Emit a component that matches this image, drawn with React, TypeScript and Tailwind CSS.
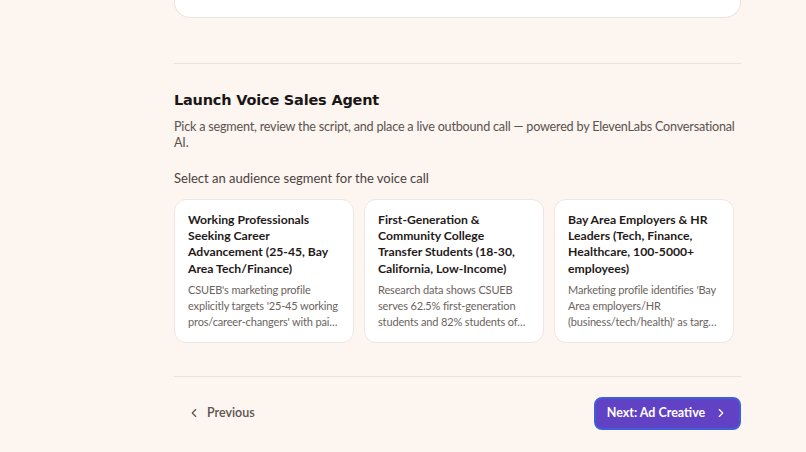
import { ChevronLeft, ChevronRight } from "lucide-react";

const segments = [
    {
        title: "Working Professionals Seeking Career Advancement (25-45, Bay Area Tech/Finance)",
        desc: "CSUEB's marketing profile explicitly targets '25-45 working pros/career-changers' with pain points around time, cost and flexibility in their next step.",
    },
    {
        title: "First-Generation & Community College Transfer Students (18-30, California, Low-Income)",
        desc: "Research data shows CSUEB serves 62.5% first-generation students and 82% students of color across the East Bay region.",
    },
    {
        title: "Bay Area Employers & HR Leaders (Tech, Finance, Healthcare, 100-5000+ employees)",
        desc: "Marketing profile identifies 'Bay Area employers/HR (business/tech/health)' as target partners for workforce programs.",
    },
];

export default function App() {
    return (
        <div className="min-h-screen w-full bg-[#fcf5f0] font-['Lato',sans-serif] text-[#1c1917]">
            <div className="ml-[174px] w-[567px]">
                {/* Previous section card (cut off) */}
                <div className="h-[18px] rounded-b-[16px] border border-t-0 border-[#ece4df] bg-white" />

                <div className="mt-[45px] border-t border-[#ebe2dc]" />

                {/* Voice agent section */}
                <div className="pt-[26px]">
                    <h2 className="font-['DejaVu_Sans',sans-serif] text-[14.5px] font-bold tracking-[-0.2px] text-[#1a1616]">
                        Launch Voice Sales Agent
                    </h2>
                    <p className="mt-[7px] text-[12.6px] leading-[16px] tracking-[-0.2px] text-[#5b524f]">
                        <span className="whitespace-nowrap">
                            Pick a segment, review the script, and place a live outbound call — powered by ElevenLabs Conversational
                        </span>
                        <br />
                        AI.
                    </p>

                    <p className="mt-[19px] text-[13px] leading-[16px] text-[#4a4240]">
                        Select an audience segment for the voice call
                    </p>

                    <div className="mt-[13px] grid grid-cols-[repeat(3,180px)] gap-[10px]">
                        {segments.map((s) => (
                            <div
                                key={s.title}
                                className="h-[144px] cursor-pointer rounded-[12px] border border-[#efe6e1] bg-white px-[13px] pt-[12px]"
                            >
                                <div className="text-[12.2px] font-bold leading-[16.3px] text-[#1f1a19]">{s.title}</div>
                                <div className="mt-[5px] line-clamp-3 text-[11px] leading-[16px] tracking-[-0.15px] text-[#6b6360]">
                                    {s.desc}
                                </div>
                            </div>
                        ))}
                    </div>
                </div>

                <div className="mt-[33px] border-t border-[#ebe2dc]" />

                <div className="flex items-center justify-between pt-[20px]">
                    <button className="flex items-center gap-[6px] pl-[13px] text-[12.5px] font-semibold text-[#5b524f]">
                        <ChevronLeft size={14} strokeWidth={2} />
                        Previous
                    </button>
                    <button className="flex h-[33px] w-[147px] items-center justify-center gap-[9px] rounded-[8px] border-2 border-[#3f5fd8] bg-[#6141c4] text-[12.5px] font-bold text-white">
                        Next: Ad Creative
                        <ChevronRight size={14} strokeWidth={2} />
                    </button>
                </div>
            </div>
        </div>
    );
}
